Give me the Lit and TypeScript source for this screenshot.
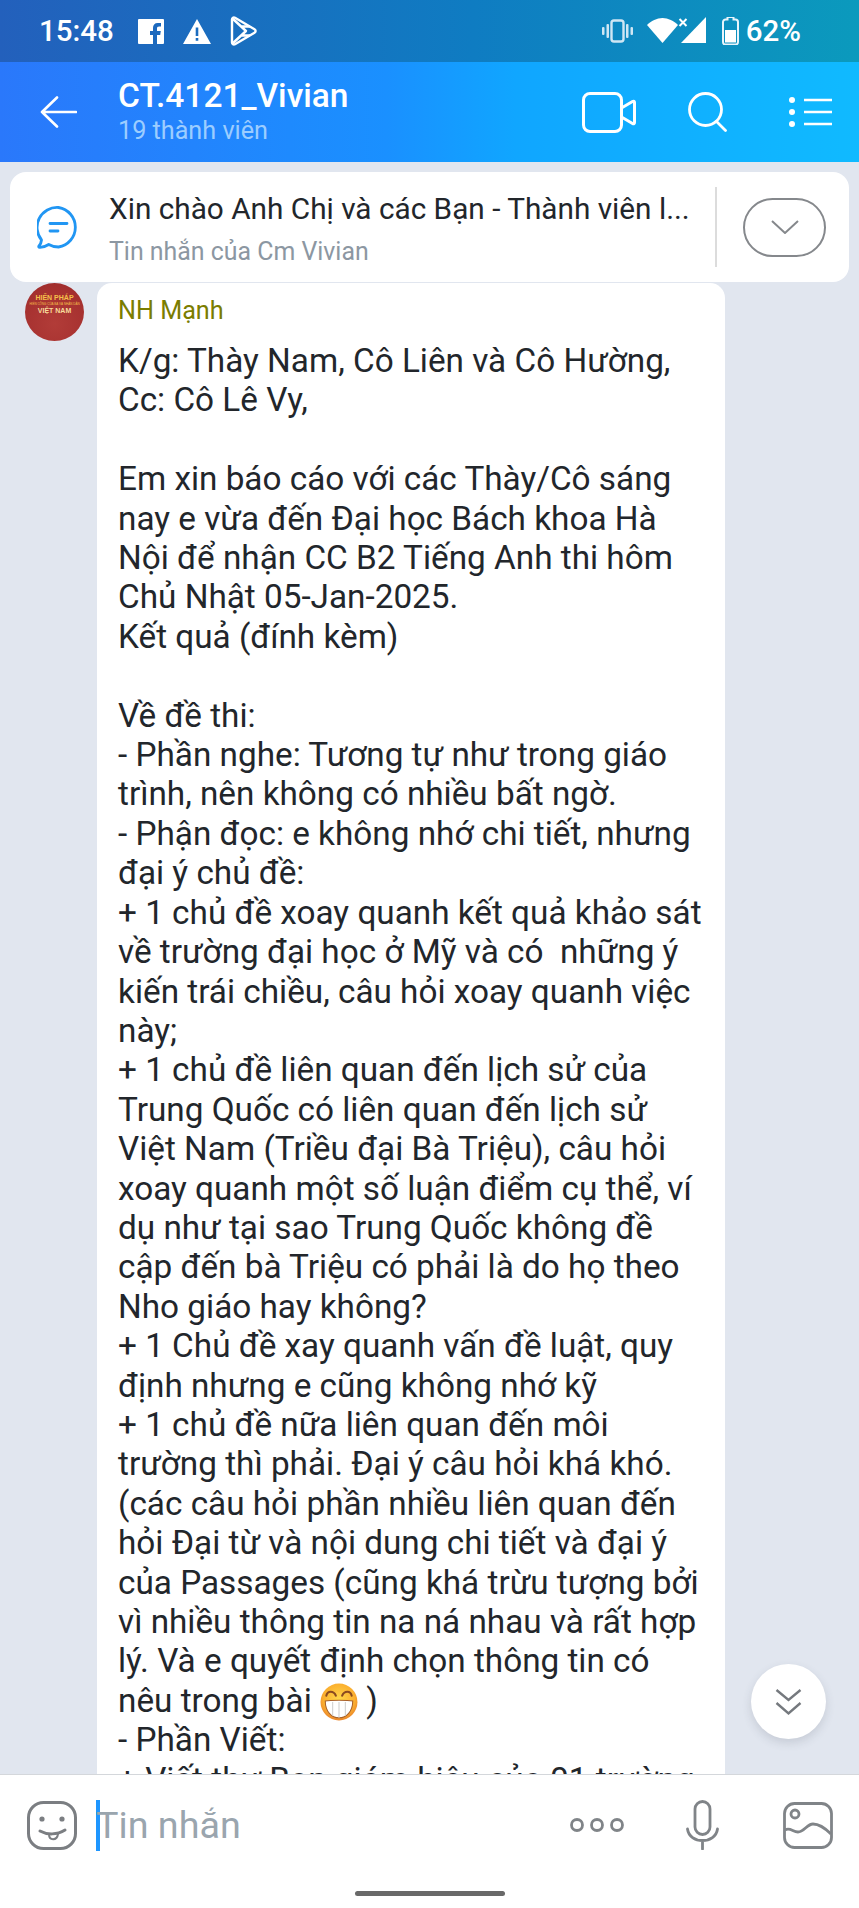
import { LitElement, html, css } from "lit";
import { customElement } from "lit/decorators.js";

const grin = html`<svg class="grin" viewBox="0 0 36 36">
  <defs><radialGradient id="gr" cx="50%" cy="42%" r="60%"><stop offset="0" stop-color="#ffd84a"/><stop offset="0.7" stop-color="#fbb030"/><stop offset="1" stop-color="#e8802a"/></radialGradient></defs>
  <circle cx="18" cy="18" r="17.5" fill="url(#gr)"/>
  <path d="M5 17c5-1 21-1 26 0 0 10-6 16-13 16S5 27 5 17z" fill="#fff" stroke="#a8602a" stroke-width="1"/>
  <path d="M12 18v13M18 18v15M24 18v13" stroke="#cfcfcf" stroke-width="1"/>
  <path d="M6 12c1-5 7-5 9 0M21 12c2-5 8-5 9 0" fill="none" stroke="#8a4a20" stroke-width="2" stroke-linecap="round"/>
</svg>`;

const lines: unknown[] = [
  "K/g: Thày Nam, Cô Liên và Cô Hường,",
  "Cc: Cô Lê Vy,",
  "",
  "Em xin báo cáo với các Thày/Cô sáng",
  "nay e vừa đến Đại học Bách khoa Hà",
  "Nội để nhận CC B2 Tiếng Anh thi hôm",
  "Chủ Nhật 05-Jan-2025.",
  "Kết quả (đính kèm)",
  "",
  "Về đề thi:",
  "- Phần nghe: Tương tự như trong giáo",
  "trình, nên không có nhiều bất ngờ.",
  "- Phận đọc: e không nhớ chi tiết, nhưng",
  "đại ý chủ đề:",
  "+ 1 chủ đề xoay quanh kết quả khảo sát",
  "về trường đại học ở Mỹ và có  những ý",
  "kiến trái chiều, câu hỏi xoay quanh việc",
  "này;",
  "+ 1 chủ đề liên quan đến lịch sử của",
  "Trung Quốc có liên quan đến lịch sử",
  "Việt Nam (Triều đại Bà Triệu), câu hỏi",
  "xoay quanh một số luận điểm cụ thể, ví",
  "dụ như tại sao Trung Quốc không đề",
  "cập đến bà Triệu có phải là do họ theo",
  "Nho giáo hay không?",
  "+ 1 Chủ đề xay quanh vấn đề luật, quy",
  "định nhưng e cũng không nhớ kỹ",
  "+ 1 chủ đề nữa liên quan đến môi",
  "trường thì phải. Đại ý câu hỏi khá khó.",
  "(các câu hỏi phần nhiều liên quan đến",
  "hỏi Đại từ và nội dung chi tiết và đại ý",
  "của Passages (cũng khá trừu tượng bởi",
  "vì nhiều thông tin na ná nhau và rất hợp",
  "lý. Và e quyết định chọn thông tin có",
  html`nêu trong bài ${grin} )`,
  "- Phần Viết:",
  "+ Viết thư Ban giám hiệu của 01 trường",
];

@customElement("app-root")
export class AppRoot extends LitElement {
  static styles = css`
    :host {
      display: flex;
      flex-direction: column;
      height: 1908px;
      overflow: hidden;
      background: #e1e6ef;
      font-family: Roboto, "Noto Sans", sans-serif;
      position: relative;
    }
    svg {
      display: block;
      flex: none;
    }

    /* status bar */
    .status {
      height: 62px;
      flex: none;
      display: flex;
      align-items: center;
      padding: 0 58px 0 39px;
      color: #fff;
      font-size: 29.5px;
      font-weight: 500;
      background: linear-gradient(90deg, #2360bc 0%, #0f7cc2 55%, #0b9abd 100%);
    }
    .time {
      margin-right: 24px;
    }
    .st-left {
      display: flex;
      align-items: center;
      gap: 19px;
    }
    .st-right {
      margin-left: auto;
      display: flex;
      align-items: center;
    }

    /* header */
    .header {
      height: 100px;
      flex: none;
      display: flex;
      align-items: center;
      padding: 0 27px 0 40px;
      color: #fff;
      background: linear-gradient(90deg, #2a78fb 0%, #1a90ff 45%, #10a6ff 60%, #10baff 100%);
    }
    .titles {
      margin-left: 41px;
      margin-top: -1px;
    }
    .title {
      font-size: 33.5px;
      font-weight: 500;
      line-height: 38px;
    }
    .members {
      font-size: 25.2px;
      line-height: 31px;
      color: #9ccdff;
    }
    .actions {
      margin-left: auto;
      display: flex;
      align-items: center;
    }

    /* pinned message */
    .pin {
      flex: none;
      height: 110px;
      margin: 10px 10px 0 10px;
      background: #fff;
      border-radius: 16px;
      display: flex;
      align-items: center;
      position: relative;
      z-index: 1;
      box-sizing: border-box;
      padding: 0 23px 0 27px;
    }
    .pin-text {
      margin: 2px 0 0 29px;
      flex: 1;
    }
    .pin-title {
      font-size: 29.75px;
      line-height: 40px;
      color: #22262b;
      white-space: nowrap;
    }
    .pin-sub {
      font-size: 24.9px;
      line-height: 32px;
      margin-top: 7px;
      color: #8c97a2;
    }
    .divider {
      width: 2px;
      height: 80px;
      background: #dcdcdc;
      margin-right: 26px;
    }
    .expand {
      width: 83px;
      height: 59px;
      box-sizing: border-box;
      border: 2px solid #85888c;
      border-radius: 30px;
      display: flex;
      align-items: center;
      justify-content: center;
    }

    /* conversation */
    .chat {
      flex: 1;
      min-height: 0;
      display: flex;
      align-items: flex-start;
      padding: 1px 0 0 25px;
      overflow: hidden;
    }
    .avatar {
      width: 59px;
      height: 58px;
      flex: none;
      border-radius: 50%;
      background: radial-gradient(circle at 50% 70%, #b23c38 0%, #a5302f 70%, #962a2a 100%);
      display: flex;
      flex-direction: column;
      align-items: center;
      padding-top: 11px;
      box-sizing: border-box;
      color: #f5c04a;
      font-family: "Liberation Sans", sans-serif;
      font-weight: 700;
      font-size: 7px;
      line-height: 8px;
      white-space: nowrap;
    }
    .avatar .tiny {
      font-size: 3px;
      line-height: 5px;
      font-weight: 400;
    }
    .avatar .vn {
      color: #f8dc9c;
    }
    .bubble {
      margin-left: 13px;
      width: 628px;
      flex: none;
      box-sizing: border-box;
      background: #fff;
      border-radius: 15px 15px 0 0;
      padding: 14px 0 0 21px;
      min-height: 1600px;
    }
    .name {
      font-size: 25.2px;
      line-height: 28px;
      color: #7b7d00;
      margin-bottom: 16px;
    }
    .line {
      font-size: 33.3px;
      line-height: 39.42px;
      height: 39.42px;
      color: #22262b;
      white-space: pre;
    }
    .grin {
      display: inline-block;
      width: 38px;
      height: 38px;
      vertical-align: -9px;
    }
    .to-bottom {
      position: absolute;
      left: 751px;
      top: 1664px;
      width: 75px;
      height: 75px;
      border-radius: 50%;
      background: #fff;
      box-shadow: 0 4px 10px rgba(60, 70, 90, 0.16);
      display: flex;
      align-items: center;
      justify-content: center;
    }

    /* composer */
    .composer {
      flex: none;
      height: 134px;
      box-sizing: border-box;
      background: #fff;
      border-top: 1px solid #d4d7db;
      position: relative;
      z-index: 1;
    }
    .compose-row {
      display: flex;
      align-items: center;
      height: 100px;
      padding: 0 26px 0 27px;
    }
    .cursor {
      width: 4px;
      height: 51px;
      background: #1e96ff;
      margin-left: 19px;
      flex: none;
    }
    .placeholder {
      font-size: 37.7px;
      color: #9aa5ae;
      flex: 1;
      margin-left: -4px;
    }
    .home {
      width: 150px;
      height: 5px;
      border-radius: 3px;
      background: #696969;
      margin: 16px auto 0;
    }
  `;

  render() {
    return html`
      <div class="status">
        <span class="time">15:48</span>
        <div class="st-left">
          <svg width="26" height="25" viewBox="0 0 26 25"><path fill="#fff" d="M1 0h24a1 1 0 0 1 1 1v23a1 1 0 0 1-1 1h-6v-9h3.2l.6-4H19V9.500c0-1.300.5-2 2.100-2H23V4h-3.200C16.500 4 15 6 15 9v3h-3v4h3v9H1a1 1 0 0 1-1-1V1a1 1 0 0 1 1-1z"/></svg>
          <svg width="28" height="25" viewBox="0 0 28 25"><path fill="#fff" fill-rule="evenodd" d="M14 0l14 25H0zM12.700 8.500v8.500h2.600V8.500zm0 10.500v2.800h2.600V19z"/></svg>
          <svg width="27" height="30" viewBox="0 0 27 30" fill="none" stroke="#fff" stroke-width="2.400" stroke-linejoin="round"><path d="M2 3.500c0-1.500 1.500-2.500 3-1.700l19.500 11.500c1.500.9 1.500 2.500 0 3.400L5 28.200c-1.500.8-3-.2-3-1.700z"/><path d="M2.500 2.500L16 15 2.500 27.500M11 10.500h9M11 19.500h9"/></svg>
        </div>
        <div class="st-right">
          <svg width="31" height="24" viewBox="0 0 31 24" fill="#cfe6f4"><rect x="9.500" y="1.500" width="12" height="21" rx="2.500" fill="none" stroke="#cfe6f4" stroke-width="2.400"/><rect x="4.500" y="5" width="2.500" height="14" rx="1"/><rect x="24" y="5" width="2.500" height="14" rx="1"/><rect x="0" y="8" width="2.500" height="8" rx="1"/><rect x="28.500" y="8" width="2.500" height="8" rx="1"/></svg>
          <svg style="margin-left:14px" width="59" height="28" viewBox="0 0 59 28" fill="#fff"><path d="M0 8C4 4 10 1 15.500 1S27 4 31 8L15.500 26z"/><path d="M59 0v26H34z"/><path d="M32.500 2l7 7M39.500 2l-7 7" stroke="#fff" stroke-width="2" fill="none"/></svg>
          <svg style="margin-left:16px" width="17" height="28" viewBox="0 0 17 28"><path d="M5.500 0h6v2.500h2A2.500 2.500 0 0 1 16 5v20a2.500 2.500 0 0 1-2.500 2.500h-10A2.500 2.500 0 0 1 1 25V5a2.500 2.500 0 0 1 2.500-2.500h2z" fill="none" stroke="#e8f4fb" stroke-width="2"/><rect x="3" y="13" width="11" height="12.500" fill="#fff"/></svg>
          <span style="margin-left:7px">62%</span>
        </div>
      </div>

      <div class="header">
        <svg width="37" height="32" viewBox="0 0 37 32" fill="none" stroke="#fff" stroke-width="2.600" stroke-linecap="round" stroke-linejoin="round"><path d="M36 16H2M17 1.500L2 16l15 14.500"/></svg>
        <div class="titles">
          <div class="title">CT.4121_Vivian</div>
          <div class="members">19 thành viên</div>
        </div>
        <div class="actions">
          <svg width="54" height="41" viewBox="0 0 54 41" fill="none" stroke="#fff" stroke-width="3" stroke-linejoin="round"><path d="M8 1.500h25a6.500 6.500 0 0 1 6.500 6.500v25a6.500 6.500 0 0 1-6.500 6.500H8A6.500 6.500 0 0 1 1.500 33V8A6.500 6.500 0 0 1 8 1.500z"/><path d="M39.500 16l11-6.500c1.200-.7 2 0 2 1v20c0 1-.8 1.700-2 1L39.500 25"/></svg>
          <svg style="margin-left:52px" width="39" height="40" viewBox="0 0 39 40" fill="none" stroke="#fff" stroke-width="2.800" stroke-linecap="round"><circle cx="17.500" cy="17.500" r="16"/><path d="M28.500 29.500l9 9"/></svg>
          <svg style="margin-left:62px" width="43" height="30" viewBox="0 0 43 30"><g fill="#fff"><circle cx="3" cy="3" r="3"/><circle cx="3" cy="15" r="3"/><circle cx="3" cy="27" r="3"/></g><path d="M15 3h28M15 15h28M15 27h28" stroke="#fff" stroke-width="2.600"/></svg>
        </div>
      </div>

      <div class="pin">
        <svg width="43" height="43" viewBox="0 0 43 43" fill="none" stroke="#2196f3" stroke-width="2.800" stroke-linecap="round" stroke-linejoin="round"><path d="M21.500 1.500a20 20 0 0 1 0 39.500c-3.500 0-7-.9-9.800-2.500-2.500 1.600-6 3-9 2.900-1 0-1.200-.8-.7-1.400 1.500-1.800 2.300-3.800 2.500-6A20 20 0 0 1 21.500 1.500z"/><path d="M13 17.500h17M13 25h8"/></svg>
        <div class="pin-text">
          <div class="pin-title">Xin chào Anh Chị và các Bạn - Thành viên l...</div>
          <div class="pin-sub">Tin nhắn của Cm Vivian</div>
        </div>
        <div class="divider"></div>
        <div class="expand">
          <svg width="28" height="14" viewBox="0 0 28 14" fill="none" stroke="#85888c" stroke-width="2"><path d="M1 1l13 12L27 1"/></svg>
        </div>
      </div>

      <div class="chat">
        <div class="avatar">
          <span>HIẾN PHÁP</span>
          <span class="tiny">HIẾN CÔNG CỦA BÁ VÀ NHÂN DÂN</span>
          <span class="vn">VIỆT NAM</span>
        </div>
        <div class="bubble">
          <div class="name">NH Mạnh</div>
          ${lines.map((l) => html`<div class="line">${l}</div>`)}
        </div>
      </div>

      <div class="to-bottom">
        <svg width="27" height="28" viewBox="0 0 27 28" fill="none" stroke="#75797e" stroke-width="2.400"><path d="M1.500 2l12 10 12-10M1.500 15l12 10.500 12-10.500"/></svg>
      </div>

      <div class="composer">
        <div class="compose-row">
          <svg width="50" height="49" viewBox="0 0 50 49" fill="none" stroke="#7b7e82" stroke-width="3" stroke-linecap="round"><rect x="1.500" y="1.500" width="47" height="46" rx="15"/><circle cx="15" cy="18" r="2.600" fill="#7b7e82" stroke="none"/><circle cx="35" cy="18" r="2.600" fill="#7b7e82" stroke="none"/><path d="M13 30c7 4 17 4 25-1"/><path d="M22 33c0 7 8 7 9 0" stroke-width="2"/></svg>
          <div class="cursor"></div>
          <div class="placeholder">Tin nhắn</div>
          <svg style="margin-right:6px" width="54" height="14" viewBox="0 0 54 14" fill="none" stroke="#808488" stroke-width="2.800"><circle cx="7" cy="7" r="5.500"/><circle cx="27" cy="7" r="5.500"/><circle cx="47" cy="7" r="5.500"/></svg>
          <svg style="margin-left:56px" width="33" height="50" viewBox="0 0 33 50" fill="none" stroke="#808488" stroke-width="2.800" stroke-linecap="round"><rect x="9" y="1.500" width="15" height="33" rx="7.500"/><path d="M1.500 29c1 7.500 7.500 11.500 15 11.500s14-4 15-11.500M16.500 41v8"/></svg>
          <svg style="margin-left:64px" width="50" height="47" viewBox="0 0 50 47" fill="none" stroke="#808488" stroke-width="2.800" stroke-linejoin="round"><rect x="1.500" y="1.500" width="47" height="44" rx="10"/><circle cx="12" cy="12" r="4"/><path d="M2 28c5-3 8 2 13 2 6 0 9-8 15-8s11 3 18 10"/></svg>
        </div>
        <div class="home"></div>
      </div>
    `;
  }
}
